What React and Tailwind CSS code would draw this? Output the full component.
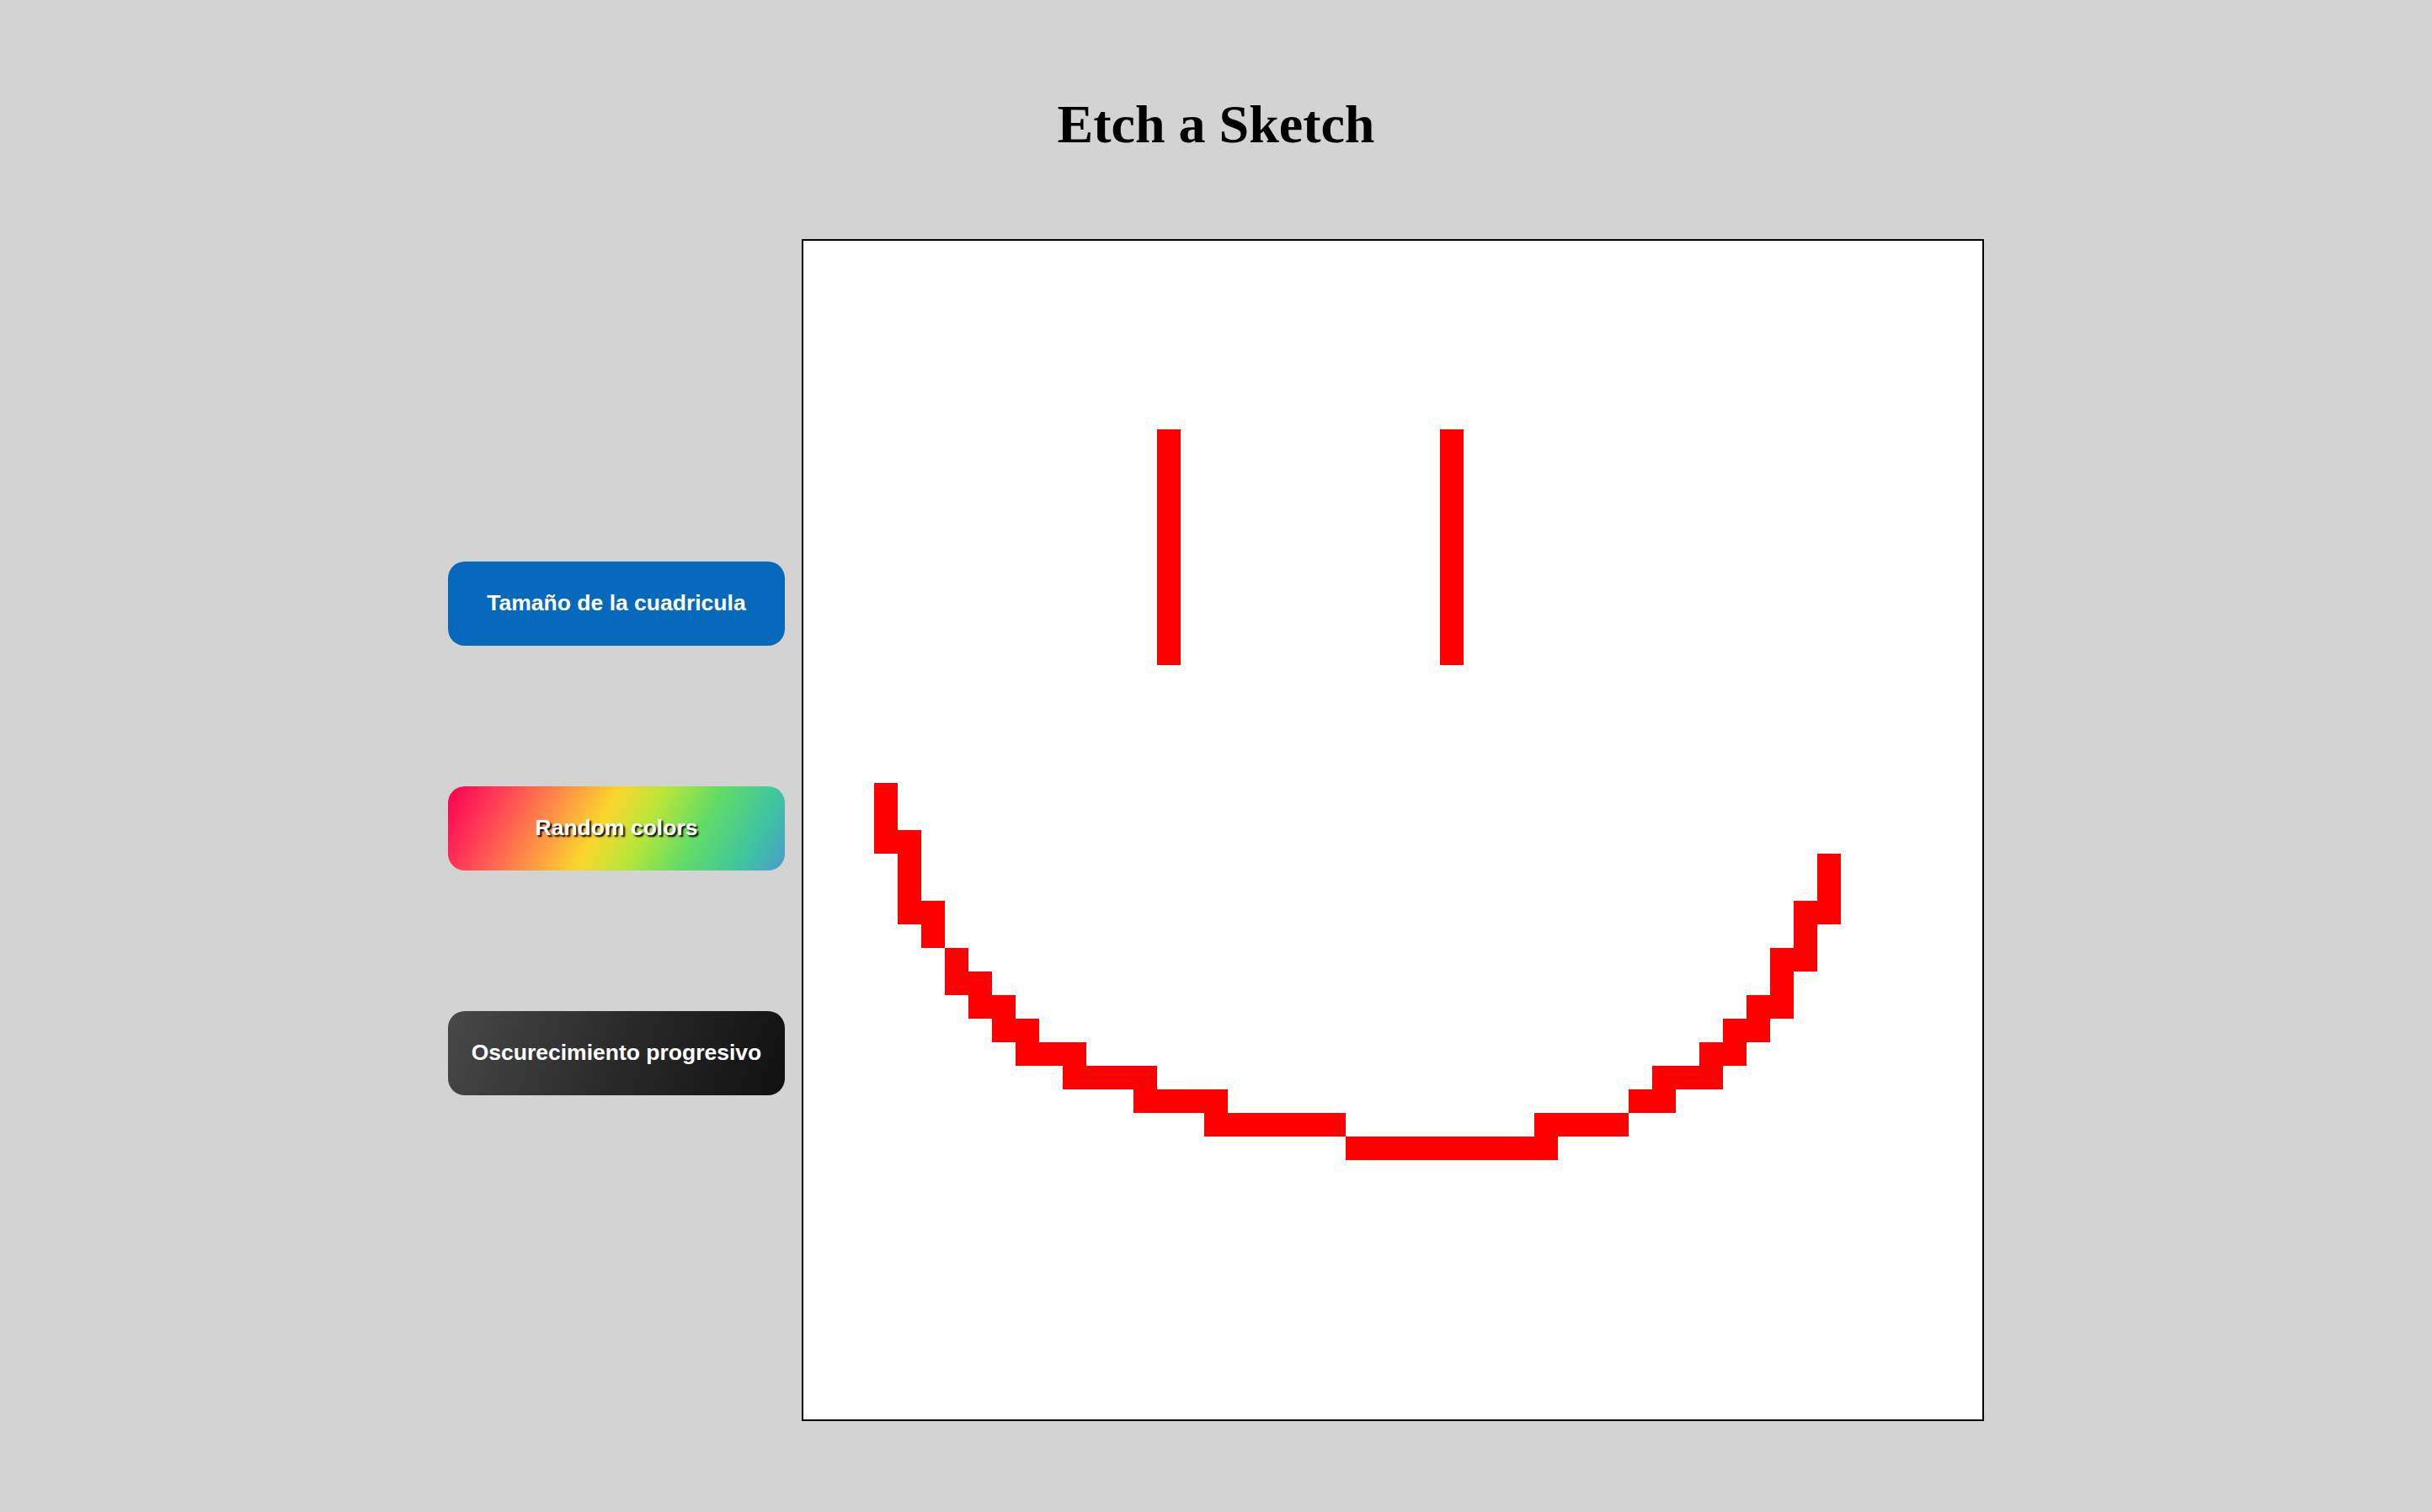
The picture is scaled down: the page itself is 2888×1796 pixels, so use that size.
import { useMemo } from "react";

const SIZE = 50;

// painted cells as [row, [cols...]]
const PAINTED = [
  [8, [15, 27]], [9, [15, 27]], [10, [15, 27]], [11, [15, 27]], [12, [15, 27]],
  [13, [15, 27]], [14, [15, 27]], [15, [15, 27]], [16, [15, 27]], [17, [15, 27]],
  [23, [3]],
  [24, [3]],
  [25, [3, 4]],
  [26, [4, 43]],
  [27, [4, 43]],
  [28, [4, 5, 42, 43]],
  [29, [5, 42]],
  [30, [6, 41, 42]],
  [31, [6, 7, 41]],
  [32, [7, 8, 40, 41]],
  [33, [8, 9, 39, 40]],
  [34, [9, 10, 11, 38, 39]],
  [35, [11, 12, 13, 14, 36, 37, 38]],
  [36, [14, 15, 16, 17, 35, 36]],
  [37, [17, 18, 19, 20, 21, 22, 31, 32, 33, 34]],
  [38, [23, 24, 25, 26, 27, 28, 29, 30, 31]],
];

function Board() {
  const cells = useMemo(() => {
    const on = new Set();
    PAINTED.forEach(([r, cols]) => cols.forEach((c) => on.add(r * SIZE + c)));
    return Array.from({ length: SIZE * SIZE }, (_, i) => on.has(i));
  }, []);

  return (
    <div className="border-2 border-black bg-white">
      <div className="grid grid-cols-[repeat(50,28px)] grid-rows-[repeat(50,28px)] w-[1400px] h-[1400px]">
        {cells.map((red, i) => (
          <div key={i} className={red ? "bg-[#ff0000]" : "bg-white"} />
        ))}
      </div>
    </div>
  );
}

function Controls() {
  return (
    <div className="flex flex-col gap-[167px] pb-[4px] font-['Liberation_Sans',Arial,sans-serif]">
      <button className="w-[400px] h-[100px] rounded-[20px] bg-[#0769bb] text-white text-[26.5px] font-bold">
        Tamaño de la cuadricula
      </button>
      <button className="w-[400px] h-[100px] rounded-[20px] bg-[linear-gradient(118deg,#f7004f_0%,#ff3a58_14%,#ff8a48_30%,#fbd62c_45%,#b5e63a_58%,#62dc66_72%,#3fc4a0_88%,#4a9ccc_100%)] text-white text-[26.5px] font-bold [text-shadow:2px_2px_2px_#000]">
        Random colors
      </button>
      <button className="w-[400px] h-[100px] rounded-[20px] bg-[linear-gradient(110deg,#484848_0%,#2a2a2a_50%,#101010_100%)] text-white text-[26.5px] font-bold">
        Oscurecimiento progresivo
      </button>
    </div>
  );
}

export default function App() {
  return (
    <div className="min-h-screen bg-[#d3d3d3] pt-[111px] pb-[109px]">
      <h1 className="text-center text-[64px] leading-[74px] font-bold text-black font-['Liberation_Serif','Times_New_Roman',serif]">
        Etch a Sketch
      </h1>
      <div className="mt-[99px] flex items-center justify-center gap-[20px]">
        <Controls />
        <Board />
      </div>
    </div>
  );
}
